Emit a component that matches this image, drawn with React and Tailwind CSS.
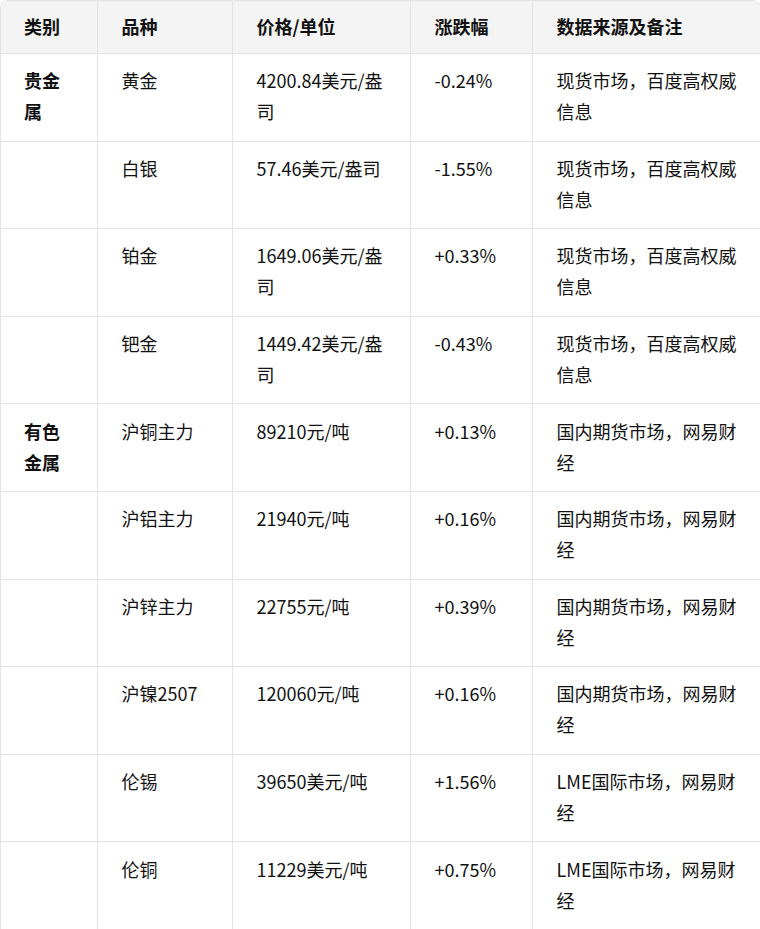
import React from "react";

const rows = [
  { cat: ["贵金", "属"], name: "黄金", price: ["4200.84美元/盎", "司"], chg: "-0.24%", src: ["现货市场，百度高权威", "信息"] },
  { cat: null, name: "白银", price: ["57.46美元/盎司"], chg: "-1.55%", src: ["现货市场，百度高权威", "信息"] },
  { cat: null, name: "铂金", price: ["1649.06美元/盎", "司"], chg: "+0.33%", src: ["现货市场，百度高权威", "信息"] },
  { cat: null, name: "钯金", price: ["1449.42美元/盎", "司"], chg: "-0.43%", src: ["现货市场，百度高权威", "信息"] },
  { cat: ["有色", "金属"], name: "沪铜主力", price: ["89210元/吨"], chg: "+0.13%", src: ["国内期货市场，网易财", "经"] },
  { cat: null, name: "沪铝主力", price: ["21940元/吨"], chg: "+0.16%", src: ["国内期货市场，网易财", "经"] },
  { cat: null, name: "沪锌主力", price: ["22755元/吨"], chg: "+0.39%", src: ["国内期货市场，网易财", "经"] },
  { cat: null, name: "沪镍2507", price: ["120060元/吨"], chg: "+0.16%", src: ["国内期货市场，网易财", "经"] },
  { cat: null, name: "伦锡", price: ["39650美元/吨"], chg: "+1.56%", src: ["LME国际市场，网易财", "经"] },
  { cat: null, name: "伦铜", price: ["11229美元/吨"], chg: "+0.75%", src: ["LME国际市场，网易财", "经"] },
];

function Lines({ lines }) {
  return lines.map((l, i) => (
    <React.Fragment key={i}>
      {i > 0 && <br />}
      {l}
    </React.Fragment>
  ));
}

export default function App() {
  const th = "text-left font-bold px-6 pt-[9.5px] pb-[11.5px] border-b border-l border-[#e3e3e3] first:border-l-0 first:pl-[23px] whitespace-nowrap";
  const td = "align-top px-6 pt-[11.3px] pb-[13.3px] border-t border-l border-[#e3e3e3] first:border-l-0 first:pl-[23px] whitespace-nowrap";
  return (
    <div
      className="w-[760px] h-[929px] overflow-hidden bg-white text-[#111111] text-[18px] leading-[31px]"
      style={{ fontFamily: '"Microsoft YaHei", "Noto Sans CJK SC", "Noto Sans", sans-serif' }}
    >
      <div className="w-[761px] border border-[#e3e3e3] rounded-t-[8px] overflow-hidden">
        <table className="table-fixed border-collapse w-[759px]">
          <colgroup>
            <col className="w-[96px]" />
            <col className="w-[135px]" />
            <col className="w-[178px]" />
            <col className="w-[122px]" />
            <col className="w-[228px]" />
          </colgroup>
          <thead className="bg-[#f4f4f4]">
            <tr>
              <th className={th}>类别</th>
              <th className={th}>品种</th>
              <th className={th}>价格/单位</th>
              <th className={th}>涨跌幅</th>
              <th className={th}>数据来源及备注</th>
            </tr>
          </thead>
          <tbody>
            {rows.map((r, i) => (
              <tr key={i} className={i === 0 ? "[&>td]:border-t-0" : ""}>
                <td className={td + " font-bold"}>{r.cat ? <Lines lines={r.cat} /> : null}</td>
                <td className={td}>{r.name}</td>
                <td className={td}><Lines lines={r.price} /></td>
                <td className={td}>{r.chg}</td>
                <td className={td}><div className="h-[62px]"><Lines lines={r.src} /></div></td>
              </tr>
            ))}
          </tbody>
        </table>
      </div>
    </div>
  );
}
